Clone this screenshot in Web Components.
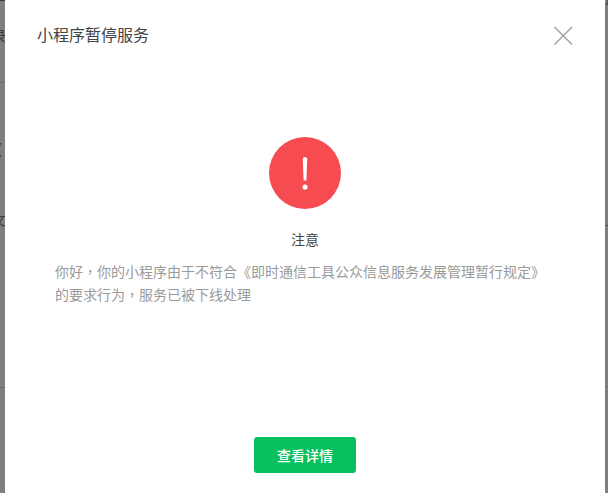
<!DOCTYPE html>
<html lang="zh-CN">
<head>
<meta charset="utf-8">
<title>小程序暂停服务</title>
<style>
  html, body { margin: 0; height: 100%; }
  body { font-family: "Liberation Sans", "Noto Sans CJK SC", sans-serif; overflow: hidden; }
  .tc { font-family: "Noto Sans CJK TC", sans-serif; }
</style>
</head>
<body>
<modal-backdrop>
  <pause-dialog title-text="小程序暂停服务">
    <notice-icon slot="icon"></notice-icon>
    <span slot="label">注意</span>
    <span slot="text">你好<span class="tc" lang="zh-TW">，</span>你的小程序由于不符合《即时通信工具公众信息服务发展管理暂行规定》的要求行为<span class="tc" lang="zh-TW">，</span>服务已被下线处理</span>
    <green-button slot="action">查看详情</green-button>
  </pause-dialog>
</modal-backdrop>

<script>
class ModalBackdrop extends HTMLElement {
  constructor () {
    super()
    this.shadow = this.attachShadow({ mode: 'open' })
  }

  connectedCallback () {
    this.render()
  }

  render () {
    this.shadow.innerHTML = /*html*/`
    <style>
      :host {
        background: #7f7f7f;
        color: #333;
        display: flex;
        height: 100vh;
        overflow: hidden;
        padding-left: 5px;
        position: relative;
      }
      /* bits of the page behind the dialog */
      .behind {
        color: #3a3a3a;
        font-size: 14px;
        line-height: 16px;
        position: absolute;
      }
      .rule {
        background: #6d6d6d;
        height: 1px;
        position: absolute;
        width: 8px;
      }
    </style>
    <div class="rule" style="left: 0; top: 82px"></div>
    <div class="rule" style="left: 0; top: 387px"></div>
    <div class="rule" style="left: 600px; top: 225px; background: #555"></div>
    <div class="rule" style="left: 600px; top: 386px"></div>
    <span class="behind" style="left: -8px; top: 28px">录</span>
    <span class="behind" style="left: -3px; top: 141px">(</span>
    <span class="behind" style="left: -8px; top: 212px">文</span>
    <span class="behind" style="left: -8px; top: -9px">字</span>
    <span class="behind" style="left: 605px; top: -7px">项</span>
    <slot></slot>
    `
  }
}

class PauseDialog extends HTMLElement {
  constructor () {
    super()
    this.shadow = this.attachShadow({ mode: 'open' })
  }

  connectedCallback () {
    this.render()
  }

  render () {
    this.shadow.innerHTML = /*html*/`
    <style>
      :host {
        background: #fff;
        display: flex;
        flex-direction: column;
        height: 493px;
        position: relative;
        width: 600px;
      }
      header {
        align-items: center;
        display: flex;
        height: 70px;
        justify-content: space-between;
        padding: 0 32px;
      }
      h1 {
        color: #444;
        font-size: 16px;
        font-weight: 400;
        margin: 0 0 2px;
      }
      .close {
        display: block;
        height: 20px;
        margin-top: 1px;
        width: 20px;
      }
      .body {
        align-items: center;
        display: flex;
        flex-direction: column;
        padding-top: 67px;
      }
      .label {
        color: #444;
        font-size: 14px;
        line-height: 20px;
        margin-top: 21px;
      }
      .text {
        color: #9a9a9a;
        font-size: 14px;
        line-height: 22px;
        margin-top: 10px;
        padding: 0 52px 0 50px;
      }
      footer {
        display: flex;
        justify-content: center;
        margin-top: auto;
        padding-bottom: 20px;
      }
    </style>
    <header>
      <h1>${this.getAttribute('title-text')}</h1>
      <svg class="close" viewBox="0 0 20 20">
        <path d="M1.5 1 L19 18.5 M19 1 L1.5 18.5" fill="none" stroke="#a3a3a3" stroke-width="1.5"/>
      </svg>
    </header>
    <div class="body">
      <slot name="icon"></slot>
      <div class="label"><slot name="label"></slot></div>
      <div class="text"><slot name="text"></slot></div>
    </div>
    <footer><slot name="action"></slot></footer>
    `
  }
}

class NoticeIcon extends HTMLElement {
  constructor () {
    super()
    this.shadow = this.attachShadow({ mode: 'open' })
  }

  connectedCallback () {
    this.render()
  }

  render () {
    this.shadow.innerHTML = /*html*/`
    <style>
      :host {
        display: block;
        height: 72px;
        width: 72px;
      }
      svg {
        display: block;
      }
    </style>
    <svg width="72" height="72" viewBox="0 0 72 72">
      <circle cx="36" cy="36" r="36" fill="#f64b51"/>
      <path d="M33.8 22.2 a2.2 2.2 0 0 1 4.4 0 L37.4 43.5 h-2.8 Z" fill="#fff"/>
      <circle cx="36" cy="50" r="2.6" fill="#fff"/>
    </svg>
    `
  }
}

class GreenButton extends HTMLElement {
  constructor () {
    super()
    this.shadow = this.attachShadow({ mode: 'open' })
  }

  connectedCallback () {
    this.render()
  }

  render () {
    this.shadow.innerHTML = /*html*/`
    <style>
      :host {
        align-items: center;
        background: #07c160;
        border-radius: 3px;
        color: #fff;
        display: flex;
        font-size: 14px;
        font-weight: 500;
        height: 36px;
        justify-content: center;
        width: 102px;
      }
    </style>
    <slot></slot>
    `
  }
}

customElements.define('modal-backdrop', ModalBackdrop)
customElements.define('pause-dialog', PauseDialog)
customElements.define('notice-icon', NoticeIcon)
customElements.define('green-button', GreenButton)
</script>
</body>
</html>
